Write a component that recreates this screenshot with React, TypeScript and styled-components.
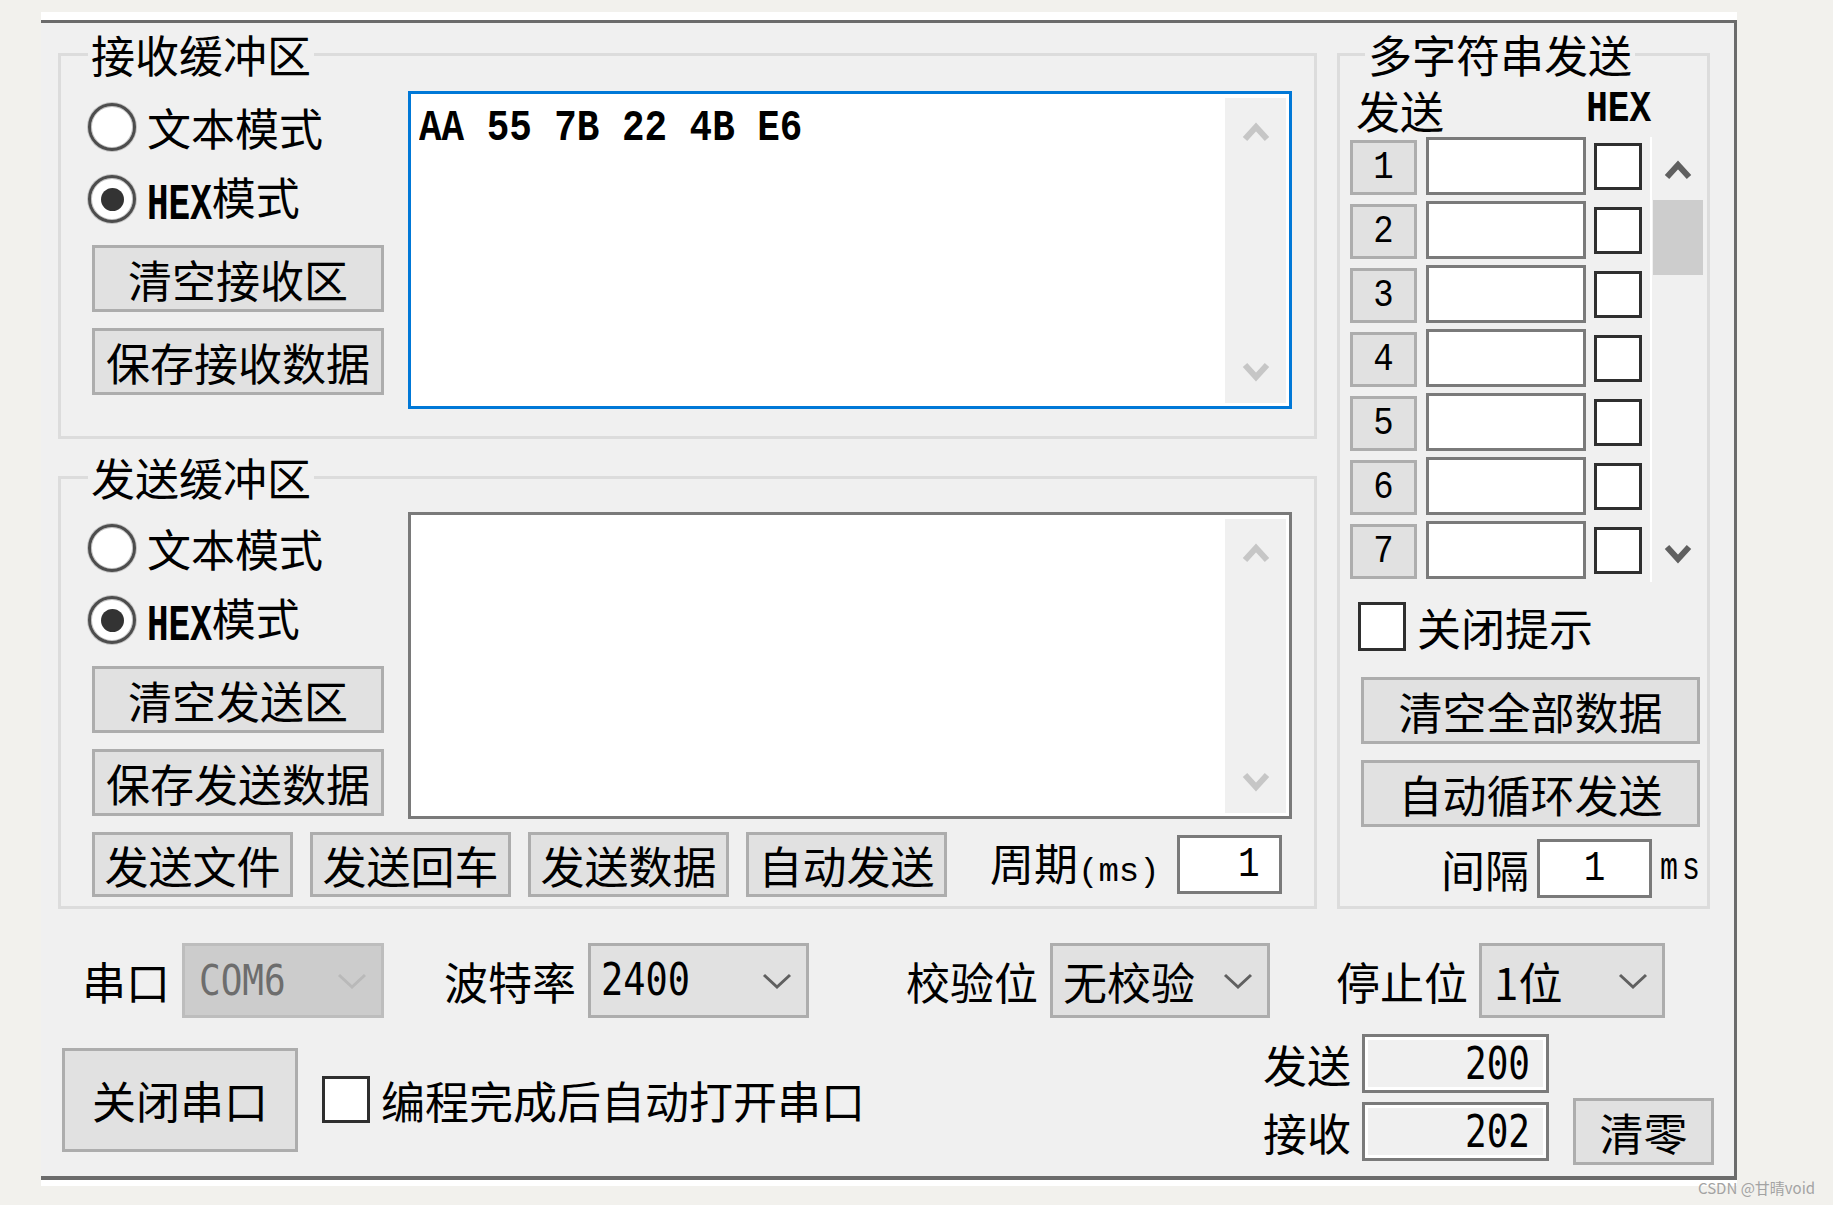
import styled, { createGlobalStyle } from 'styled-components';

const GlobalStyle = createGlobalStyle`
  html, body {
    margin: 0;
    padding: 0;
    background: #f2f1ed;
  }
  body {
    font-family: "Noto Sans CJK SC", "Noto Sans", sans-serif;
    color: #000;
  }
  * {
    box-sizing: border-box;
  }
`;

const Page = styled.div`
  position: relative;
  width: 1833px;
  height: 1205px;
  padding: 12px 0 0 41px;
  overflow: hidden;
`;

const Shell = styled.div`
  width: 1696px;
  background: #fff;
  padding: 8px 0 6px;
`;

const Frame = styled.div`
  background: #f0f0f0;
  border-top: 3px solid #6b6b6b;
  border-right: 3px solid #6b6b6b;
  border-bottom: 4px solid #6b6b6b;
  padding: 9px 0 11px;
  font-size: 44px;
  line-height: 1;
`;

const TopArea = styled.div`
  display: flex;
  align-items: stretch;
  gap: 20px;
  padding: 0 24px 0 17px;
`;

const LeftColumn = styled.div`
  width: 1259px;
  display: flex;
  flex-direction: column;
  gap: 16px;
`;

const Group = styled.fieldset<{ $pad: string; $width?: number }>`
  margin: 0;
  min-width: 0;
  border: 3px solid #dcdcdc;
  padding: ${(p) => p.$pad};
  ${(p) => (p.$width ? `width: ${p.$width}px;` : '')}
  display: flex;
  flex-direction: column;
`;

const Legend = styled.legend<{ $offset?: number }>`
  padding: 0 3px;
  margin-left: ${(p) => p.$offset ?? 0}px;
  font-size: 44px;
  line-height: 44px;
  height: 44px;
`;

const BufferBody = styled.div`
  display: flex;
  gap: 24px;
  align-items: flex-start;
`;

const SideColumn = styled.div`
  width: 296px;
  display: flex;
  flex-direction: column;
`;

const RadioRow = styled.div`
  height: 72px;
  display: flex;
  align-items: center;
  gap: 11px;
`;

const Radio = styled.span<{ $checked?: boolean }>`
  width: 48px;
  height: 48px;
  flex: none;
  border-radius: 50%;
  background: #fff;
  border: 3px solid #4d4d4d;
  box-shadow: 0 0 0 1px #c4c4c4, inset 0 0 0 1px #c4c4c4;
  display: flex;
  align-items: center;
  justify-content: center;
  &::after {
    content: '';
    display: ${(p) => (p.$checked ? 'block' : 'none')};
    width: 23px;
    height: 23px;
    border-radius: 50%;
    background: #333;
  }
`;

const WinButton = styled.button<{ $w: number; $h: number; $mt?: number; $ml?: number }>`
  width: ${(p) => p.$w}px;
  height: ${(p) => p.$h}px;
  margin: ${(p) => p.$mt ?? 0}px 0 0 ${(p) => p.$ml ?? 0}px;
  padding: 0;
  flex: none;
  border: 3px solid #adadad;
  background: #e1e1e1;
  color: #000;
  font: inherit;
  font-size: 44px;
  line-height: 1;
  display: flex;
  align-items: center;
  justify-content: center;
  white-space: nowrap;
`;

const TextArea = styled.div<{ $h: number; $focus?: boolean }>`
  width: 884px;
  height: ${(p) => p.$h}px;
  flex: none;
  background: #fff;
  border: 3px solid ${(p) => (p.$focus ? '#0078d7' : '#7a7a7a')};
  display: flex;
`;

const TextContent = styled.div`
  flex: 1;
  padding: 3px 8px;
`;

const AreaScroll = styled.div`
  width: 61px;
  margin: 4px 3px 3px 0;
  background: #f0f0f0;
  display: flex;
  flex-direction: column;
  align-items: center;
  justify-content: space-between;
  padding: 23px 0 20px;
`;

const Mono = styled.span<{
  $size: number;
  $sy?: number;
  $weight?: number;
  $sans?: boolean;
  $ls?: number;
  $color?: string;
}>`
  display: inline-block;
  font-family: ${(p) => (p.$sans ? '"DejaVu Sans Mono"' : '"Liberation Mono"')}, monospace;
  font-size: ${(p) => p.$size}px;
  font-weight: ${(p) => p.$weight ?? 400};
  letter-spacing: ${(p) => p.$ls ?? 0}px;
  color: ${(p) => p.$color ?? '#000'};
  line-height: 1;
  white-space: pre;
  transform: scaleY(${(p) => p.$sy ?? 1});
`;

const SendActions = styled.div`
  display: flex;
  align-items: center;
  gap: 17px;
  margin-top: 13px;
  padding-left: 4px;
`;

const PeriodLabel = styled.span`
  margin-left: 26px;
  white-space: nowrap;
`;

const ValueBox = styled.div<{ $w: number; $h: number; $align?: string; $pr?: number }>`
  width: ${(p) => p.$w}px;
  height: ${(p) => p.$h}px;
  flex: none;
  background: #fff;
  border: 3px solid #7a7a7a;
  display: flex;
  align-items: center;
  justify-content: ${(p) => p.$align ?? 'center'};
  padding-right: ${(p) => p.$pr ?? 0}px;
`;

/* right group */

const HeaderRow = styled.div`
  height: 44px;
  display: flex;
  align-items: center;
  justify-content: space-between;
  padding: 0 53px 0 6px;
`;

const RowsWrap = styled.div`
  display: flex;
  height: 445px;
  margin-top: 5px;
`;

const RowsList = styled.div`
  display: flex;
  flex-direction: column;
  gap: 6px;
`;

const MultiRow = styled.div`
  height: 58px;
  display: flex;
  align-items: center;
`;

const NumButton = styled(WinButton)`
  align-self: flex-end;
  margin-right: 9px;
`;

const Check = styled.span<{ $w?: number; $h?: number; $ml?: number }>`
  width: ${(p) => p.$w ?? 48}px;
  height: ${(p) => p.$h ?? 47}px;
  margin-left: ${(p) => p.$ml ?? 0}px;
  flex: none;
  background: #fff;
  border: 3px solid #2f2f2f;
`;

const SideScroll = styled.div`
  width: 53px;
  margin-left: 8px;
  border-left: 2px solid #fff;
  padding: 22px 0 17px 1px;
  display: flex;
  flex-direction: column;
  align-items: center;
`;

const Thumb = styled.div`
  width: 100%;
  height: 75px;
  margin-top: 19px;
  background: #cdcdcd;
`;

const Spacer = styled.div`
  flex: 1;
`;

const CheckRow = styled.div<{ $mt?: number; $ml?: number }>`
  display: flex;
  align-items: center;
  gap: 11px;
  margin: ${(p) => p.$mt ?? 0}px 0 0 ${(p) => p.$ml ?? 0}px;
  white-space: nowrap;
`;

const IntervalRow = styled.div`
  height: 59px;
  margin-top: 12px;
  display: flex;
  align-items: center;
  justify-content: flex-end;
  gap: 8px;
`;

/* bottom */

const ComboRow = styled.div`
  display: flex;
  align-items: center;
  height: 75px;
  margin-top: 34px;
  padding-left: 41px;
`;

const FieldGroup = styled.div<{ $ml: number; $gap: number }>`
  display: flex;
  align-items: center;
  gap: ${(p) => p.$gap}px;
  margin-left: ${(p) => p.$ml}px;
  white-space: nowrap;
`;

const Combo = styled.div<{ $w: number; $pl: number; $disabled?: boolean }>`
  width: ${(p) => p.$w}px;
  height: 75px;
  border: 3px solid ${(p) => (p.$disabled ? '#bdbdbd' : '#adadad')};
  background: ${(p) => (p.$disabled ? '#cccccc' : '#e1e1e1')};
  display: flex;
  align-items: center;
  justify-content: space-between;
  padding: 0 14px 0 ${(p) => p.$pl}px;
`;

const ActionRow = styled.div`
  display: flex;
  align-items: center;
  margin-top: 16px;
  padding: 0 20px 0 21px;
`;

const Counters = styled.div`
  margin-left: auto;
  display: grid;
  grid-template-columns: 88px 187px 154px;
  column-gap: 11px;
  row-gap: 5px;
  align-items: center;
`;

const CountField = styled.div`
  width: 187px;
  height: 59px;
  border: 3px solid #7a7a7a;
  box-shadow: inset 0 0 0 3px #fff;
  background: #f0f0f0;
  display: flex;
  align-items: center;
  justify-content: flex-end;
  padding-right: 16px;
`;

const Watermark = styled.div`
  position: absolute;
  left: 1698px;
  top: 1180px;
  font-size: 15px;
  line-height: 1;
  color: #a3a3a3;
  white-space: nowrap;
`;

const Chevron = ({ down, color }: { down?: boolean; color: string }) => (
  <svg width={28} height={22} viewBox="0 0 28 22">
    <polyline
      points={down ? '3,4 14,16 25,4' : '3,18 14,6 25,18'}
      fill="none"
      stroke={color}
      strokeWidth={6}
    />
  </svg>
);

const ComboArrow = ({ color }: { color: string }) => (
  <svg width={30} height={18} viewBox="0 0 30 18">
    <polyline points="2,3 15,15 28,3" fill="none" stroke={color} strokeWidth={3} />
  </svg>
);

const HexLabel = () => (
  <>
    <Mono $size={36} $sy={1.45} $weight={700}>
      HEX
    </Mono>
    模式
  </>
);

const BufferSide = ({ clearText, saveText }: { clearText: string; saveText: string }) => (
  <SideColumn>
    <RadioRow>
      <Radio />
      文本模式
    </RadioRow>
    <RadioRow>
      <Radio $checked />
      <span>
        <HexLabel />
      </span>
    </RadioRow>
    <WinButton $w={292} $h={67} $mt={10} $ml={4}>
      {clearText}
    </WinButton>
    <WinButton $w={292} $h={67} $mt={16} $ml={4}>
      {saveText}
    </WinButton>
  </SideColumn>
);

const rowNumbers = [1, 2, 3, 4, 5, 6, 7];

export default function App() {
  return (
    <Page>
      <GlobalStyle />
      <Shell>
        <Frame>
          <TopArea>
            <LeftColumn>
              <Group $pad="15px 22px 27px 27px">
                <Legend>接收缓冲区</Legend>
                <BufferBody>
                  <BufferSide clearText="清空接收区" saveText="保存接收数据" />
                  <TextArea $h={318} $focus>
                    <TextContent>
                      <Mono $size={37.6} $sy={1.2} $weight={700}>
                        AA 55 7B 22 4B E6
                      </Mono>
                    </TextContent>
                    <AreaScroll>
                      <Chevron color="#c6c6c6" />
                      <Chevron down color="#c6c6c6" />
                    </AreaScroll>
                  </TextArea>
                </BufferBody>
              </Group>

              <Group $pad="13px 22px 9px 27px">
                <Legend>发送缓冲区</Legend>
                <BufferBody>
                  <BufferSide clearText="清空发送区" saveText="保存发送数据" />
                  <TextArea $h={307}>
                    <TextContent />
                    <AreaScroll>
                      <Chevron color="#c6c6c6" />
                      <Chevron down color="#c6c6c6" />
                    </AreaScroll>
                  </TextArea>
                </BufferBody>
                <SendActions>
                  <WinButton $w={201} $h={65}>发送文件</WinButton>
                  <WinButton $w={201} $h={65}>发送回车</WinButton>
                  <WinButton $w={201} $h={65}>发送数据</WinButton>
                  <WinButton $w={201} $h={65}>自动发送</WinButton>
                  <PeriodLabel>
                    周期
                    <Mono $size={34}>(ms)</Mono>
                  </PeriodLabel>
                  <ValueBox $w={105} $h={59} $align="flex-end" $pr={19}>
                    <Mono $size={36} $sy={1.2}>
                      1
                    </Mono>
                  </ValueBox>
                </SendActions>
              </Group>
            </LeftColumn>

            <Group $pad="12px 3px 8px 10px" $width={373}>
              <Legend $offset={15}>多字符串发送</Legend>
              <HeaderRow>
                <span>发送</span>
                <Mono $size={36} $sy={1.25} $weight={700}>
                  HEX
                </Mono>
              </HeaderRow>
              <RowsWrap>
                <RowsList>
                  {rowNumbers.map((n) => (
                    <MultiRow key={n}>
                      <NumButton $w={67} $h={55}>
                        <Mono $size={34} $sy={1.15}>
                          {n}
                        </Mono>
                      </NumButton>
                      <ValueBox $w={160} $h={58} />
                      <Check $ml={8} />
                    </MultiRow>
                  ))}
                </RowsList>
                <SideScroll>
                  <Chevron color="#606060" />
                  <Thumb />
                  <Spacer />
                  <Chevron down color="#606060" />
                </SideScroll>
              </RowsWrap>
              <CheckRow $mt={20} $ml={8}>
                <Check $h={49} />
                关闭提示
              </CheckRow>
              <WinButton $w={339} $h={67} $mt={26} $ml={11}>
                清空全部数据
              </WinButton>
              <WinButton $w={339} $h={67} $mt={16} $ml={11}>
                自动循环发送
              </WinButton>
              <IntervalRow>
                间隔
                <ValueBox $w={115} $h={59}>
                  <Mono $size={36} $sy={1.2}>
                    1
                  </Mono>
                </ValueBox>
                <Mono $size={30} $sy={1.3} $ls={4}>
                  ms
                </Mono>
              </IntervalRow>
            </Group>
          </TopArea>

          <ComboRow>
            <FieldGroup $ml={0} $gap={12}>
              串口
              <Combo $w={202} $pl={14} $disabled>
                <Mono $size={36} $sy={1.2} $sans $color="#6d6d6d">
                  COM6
                </Mono>
                <ComboArrow color="#b9b9b9" />
              </Combo>
            </FieldGroup>
            <FieldGroup $ml={60} $gap={12}>
              波特率
              <Combo $w={221} $pl={10}>
                <Mono $size={37} $sy={1.2} $sans>
                  2400
                </Mono>
                <ComboArrow color="#606060" />
              </Combo>
            </FieldGroup>
            <FieldGroup $ml={97} $gap={12}>
              校验位
              <Combo $w={220} $pl={10}>
                <span>无校验</span>
                <ComboArrow color="#606060" />
              </Combo>
            </FieldGroup>
            <FieldGroup $ml={66} $gap={11}>
              停止位
              <Combo $w={186} $pl={12}>
                <span>1位</span>
                <ComboArrow color="#606060" />
              </Combo>
            </FieldGroup>
          </ComboRow>

          <ActionRow>
            <WinButton $w={236} $h={104}>关闭串口</WinButton>
            <CheckRow $ml={24}>
              <Check />
              编程完成后自动打开串口
            </CheckRow>
            <Counters>
              <span>发送</span>
              <CountField>
                <Mono $size={36} $sy={1.23} $sans>
                  200
                </Mono>
              </CountField>
              <span />
              <span>接收</span>
              <CountField>
                <Mono $size={36} $sy={1.23} $sans>
                  202
                </Mono>
              </CountField>
              <WinButton $w={141} $h={67} $ml={13}>
                清零
              </WinButton>
            </Counters>
          </ActionRow>
        </Frame>
      </Shell>
      <Watermark>CSDN @甘晴void</Watermark>
    </Page>
  );
}
